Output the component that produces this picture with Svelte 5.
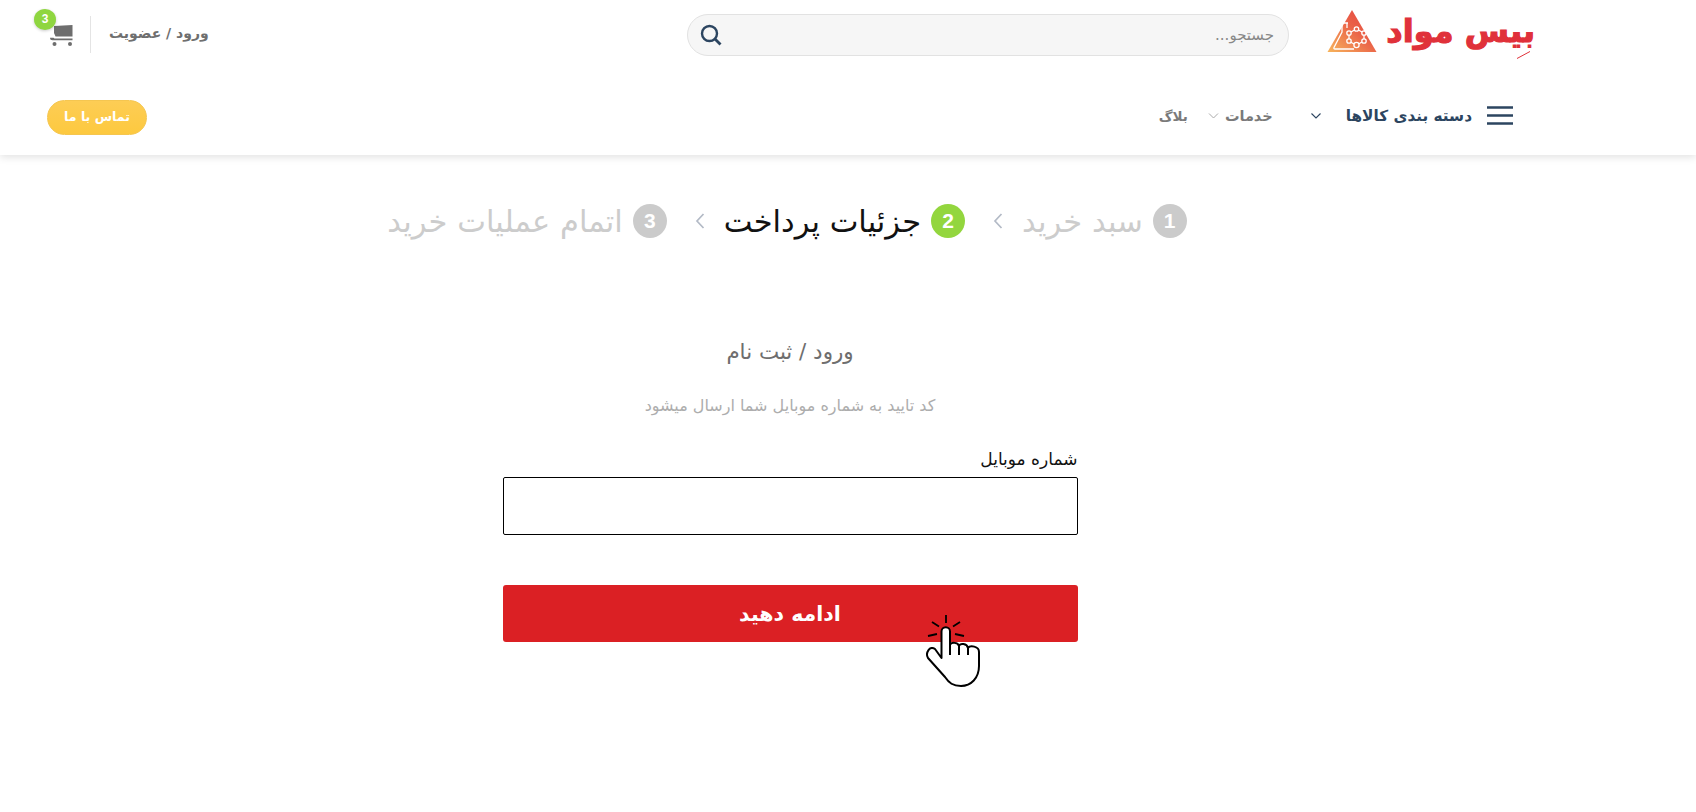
<script>
  const steps = [
    { n: 1, label: 'سبد خرید', state: 'off' },
    { n: 2, label: 'جزئیات پرداخت', state: 'on' },
    { n: 3, label: 'اتمام عملیات خرید', state: 'off' }
  ];
</script>

<div class="page" dir="rtl">
  <header class="header">
    <div class="top">
      <a class="logo" href="#logo">
        <span class="wordmark">بیس مواد<svg class="tick" viewBox="0 0 14 8" width="14" height="8" aria-hidden="true"><path d="M0 7.500 13 .5" stroke="#e0313a" stroke-width="1" /></svg></span>
        <svg class="logo-mark" viewBox="0 0 50 44" width="50" height="44" aria-hidden="true">
          <defs>
            <linearGradient id="tri" x1="0" y1="1" x2="1" y2="0">
              <stop offset="0" stop-color="#f7b55c" />
              <stop offset="0.55" stop-color="#ea6248" />
              <stop offset="1" stop-color="#e4413f" />
            </linearGradient>
          </defs>
          <path d="M25 1 L49.500 43 L0.500 43 Z" fill="url(#tri)" />
          <g fill="none" stroke="#fff" stroke-width="1.300">
            <path d="M13 14h8M15 14v9L7 38.500q-.5 1.500 1 1.500H27" />
            <path d="M20 14v5" />
            <circle cx="22" cy="24" r="2.200" />
            <circle cx="29.500" cy="20" r="2.200" />
            <circle cx="37" cy="24" r="2.200" />
            <circle cx="37" cy="32" r="2.200" />
            <circle cx="29.500" cy="36" r="2.600" />
            <circle cx="22" cy="32" r="2.200" />
            <path d="M24 23l3.500-2M31.500 21l3.500 2M37 26v4M35 33l-3.500 2M27 35l-3.500-2M22 30v-4" />
          </g>
        </svg>
      </a>
      <form class="search" onsubmit={(e) => e.preventDefault()}>
        <input class="search-input" placeholder="جستجو..." />
        <svg class="search-icon" viewBox="0 0 22 22" width="22" height="22" aria-hidden="true">
          <circle cx="9.500" cy="9.500" r="7.500" fill="none" stroke="#2c4560" stroke-width="2.400" />
          <path d="M15 15l5.500 5.500" stroke="#2c4560" stroke-width="2.800" />
        </svg>
      </form>
      <div class="account">
        <a class="login" href="#login">ورود / عضویت</a>
        <span class="divider"></span>
        <div class="cart">
          <svg viewBox="0 0 24 24" width="24" height="24" aria-hidden="true">
            <path d="M23.500 2v11.500H6.500L5 10V3z" fill="#6e6e6e" />
            <path d="M23.500 15.500v1.700H3.500a2.500 2.500 0 0 1-2.500-2.500h3.500l1 .8z" fill="#6e6e6e" />
            <circle cx="5.500" cy="21" r="2" fill="#6e6e6e" />
            <circle cx="21" cy="21" r="2" fill="#6e6e6e" />
          </svg>
          <span class="badge">3</span>
        </div>
      </div>
    </div>
    <nav class="nav">
      <a class="cats" href="#cats">
        <svg viewBox="0 0 26 20" width="26" height="20" aria-hidden="true">
          <path d="M0 1.500h26M0 9.500h26M0 17.500h26" stroke="#2c4560" stroke-width="2.400" />
        </svg>
        <span>دسته بندی کالاها</span>
        <svg class="chev-cats" viewBox="0 0 10 6" width="10" height="6" aria-hidden="true">
          <path d="M.5.500 5 5 9.500.500" fill="none" stroke="#2c4560" stroke-width="1.100" />
        </svg>
      </a>
      <a class="link services" href="#services">
        <span>خدمات</span>
        <svg viewBox="0 0 10 6" width="11" height="6" aria-hidden="true">
          <path d="M.5.500 5 5 9.500.500" fill="none" stroke="#aaa" stroke-width="1" />
        </svg>
      </a>
      <a class="link blog" href="#blog">بلاگ</a>
      <a class="contact" href="#contact">تماس با ما</a>
    </nav>
  </header>

  <main class="main">
    <ol class="steps">
      {#each steps as step, i}
        {#if i > 0}
          <li class="sep" aria-hidden="true">
            <svg viewBox="0 0 10 16" width="10" height="16">
              <path d="M8.500 1 2 8l6.500 7" fill="none" stroke="#b3bac6" stroke-width="1.700" />
            </svg>
          </li>
        {/if}
        <li class="step {step.state}">
          <span class="num">{step.n}</span>
          <span class="step-label">{step.label}</span>
        </li>
      {/each}
    </ol>

    <section class="form">
      <h1 class="title">ورود / ثبت نام</h1>
      <p class="sub">کد تایید به شماره موبایل شما ارسال میشود</p>
      <label class="label" for="mobile">شماره موبایل</label>
      <input id="mobile" class="field" type="text" />
      <div class="submit-wrap">
        <button class="submit" type="button">ادامه دهید</button>
        <svg class="hand" viewBox="0 0 100 100" width="100" height="100" aria-hidden="true">
          <path d="M41.500 58V31.500a4.250 4.250 0 0 1 8.500 0V45c1-3 8-3 9 1c1-3 8-3 9 2c2-3 11-2 11 4V66c0 12-8 20-18 20c-8 0-12-3-16-9L28 58c-3-5 2-13 7-9Z"
            fill="#fff" stroke="#000" stroke-width="2" stroke-linejoin="round" />
          <path d="M50 45V55M59 46V55M68 48V55" stroke="#000" stroke-width="2" fill="none" />
          <path d="M46 15V23M32 22l7 4.500M60 22l-7 4.500M28 36l9-2M64 36l-9-2" stroke="#000" stroke-width="1.800" fill="none" />
        </svg>
      </div>
    </section>
  </main>
</div>

<style>
  :global(body) {
    margin: 0;
    background: #fff;
    font-family: "DejaVu Sans", "Noto Sans", sans-serif;
  }
  .page {
    min-height: 812px;
    overflow: hidden;
  }
  a {
    text-decoration: none;
  }
  .header {
    height: 155px;
    background: #fff;
    box-shadow: 0 2px 8px rgba(0, 0, 0, 0.12);
    display: flex;
    flex-direction: column;
  }
  .top {
    height: 80px;
    display: flex;
    align-items: flex-start;
    padding: 0 161px 0 47px;
  }
  .logo {
    width: 208px;
    margin-top: 8px;
    margin-left: 38px;
    display: flex;
    align-items: center;
    justify-content: space-between;
    height: 46px;
  }
  .wordmark {
    position: relative;
    font-size: 32px;
    line-height: 46px;
    font-weight: 700;
    color: #e0313a;
    white-space: nowrap;
    -webkit-text-stroke: 1.200px #e0313a;
  }
  .tick {
    position: absolute;
    top: 43px;
    right: 4px;
  }
  .search {
    width: 602px;
    height: 42px;
    margin-top: 14px;
    box-sizing: border-box;
    border: 1px solid #e2e2e2;
    border-radius: 21px;
    background: #f6f6f6;
    display: flex;
    align-items: center;
    padding: 0 12px 0 12px;
    gap: 8px;
  }
  .search-input {
    flex: 1;
    min-width: 0;
    border: 0;
    background: transparent;
    outline: 0;
    font: 15px "DejaVu Sans", sans-serif;
    color: #777;
  }
  .search-input::placeholder {
    color: #888;
    opacity: 1;
  }
  .account {
    margin-right: auto;
    margin-top: 16px;
    display: flex;
    align-items: center;
    gap: 18px;
    height: 37px;
  }
  .login {
    font-size: 14px;
    font-weight: 700;
    color: #6f6f6f;
    white-space: nowrap;
    padding-bottom: 4px;
  }
  .divider {
    width: 1px;
    height: 37px;
    background: #e4e4e4;
  }
  .cart {
    position: relative;
    width: 26px;
    height: 24px;
    display: flex;
    margin-right: -1px;
  }
  .badge {
    position: absolute;
    top: -14px;
    right: 17px;
    width: 22px;
    height: 21px;
    border-radius: 50%;
    background: #8fd640;
    color: #fff;
    font: 700 12px/21px "Liberation Sans", sans-serif;
    text-align: center;
    box-shadow: 0 1px 3px rgba(0, 0, 0, 0.2);
  }
  .nav {
    flex: 1;
    display: flex;
    align-items: center;
    padding: 0 183px 0 47px;
  }
  .cats {
    display: flex;
    align-items: center;
    gap: 15px;
    color: #2c4560;
    font-size: 15.300px;
    font-weight: 700;
    white-space: nowrap;
    margin-bottom: 3px;
  }
  .chev-cats {
    margin-right: 10px;
  }
  .link {
    color: #7a7a7a;
    font-weight: 700;
    white-space: nowrap;
    margin-bottom: 3px;
  }
  .services {
    display: flex;
    align-items: center;
    gap: 6px;
    margin-right: 38px;
    font-size: 14.500px;
  }
  .blog {
    margin-right: 20px;
    font-size: 13.500px;
  }
  .contact {
    margin-right: auto;
    width: 100px;
    height: 35px;
    box-sizing: border-box;
    border-radius: 18px;
    background: linear-gradient(#fdcd55, #fdc93f);
    border: 1px solid #f5c650;
    color: #fff;
    font-size: 12.600px;
    font-weight: 700;
    line-height: 31px;
    text-align: center;
    white-space: nowrap;
  }
  .main {
    display: flex;
    flex-direction: column;
    align-items: center;
    padding-right: 116px;
  }
  .steps {
    list-style: none;
    margin: 49px 6px 0 0;
    padding: 0;
    display: flex;
    align-items: center;
    height: 34px;
  }
  .step {
    display: flex;
    align-items: center;
    gap: 10px;
    font-size: 30.500px;
    white-space: nowrap;
    color: #cccccc;
  }
  .step.on {
    color: #111;
  }
  .num {
    width: 34px;
    height: 34px;
    border-radius: 50%;
    background: #cbcbcb;
    color: #fff;
    font: 700 21px/34px "Liberation Sans", sans-serif;
    text-align: center;
  }
  .on .num {
    background: #93d63e;
  }
  .sep {
    display: flex;
    margin: 0 19px 0 28px;
  }
  .form {
    width: 575px;
    display: flex;
    flex-direction: column;
  }
  .title {
    margin: 97px 0 0;
    font-size: 21.400px;
    line-height: 34px;
    font-weight: 400;
    color: #6e6e6e;
    text-align: center;
  }
  .sub {
    margin: 25px 0 0;
    font-size: 16px;
    line-height: 24px;
    color: #adadad;
    text-align: center;
  }
  .label {
    margin-top: 28px;
    font-size: 17px;
    line-height: 26px;
    color: #111;
  }
  .field {
    margin-top: 5px;
    height: 58px;
    box-sizing: border-box;
    border: 1px solid #000;
    border-radius: 2px;
    background: #fff;
    outline: 0;
  }
  .submit-wrap {
    position: relative;
    margin-top: 50px;
  }
  .submit {
    display: block;
    width: 100%;
    height: 57px;
    border: 0;
    border-radius: 3px;
    background: #db2024;
    color: #fff;
    font: 700 20.500px "DejaVu Sans", sans-serif;
    padding: 0;
  }
  .hand {
    position: absolute;
    left: 397px;
    top: 15px;
  }
</style>
